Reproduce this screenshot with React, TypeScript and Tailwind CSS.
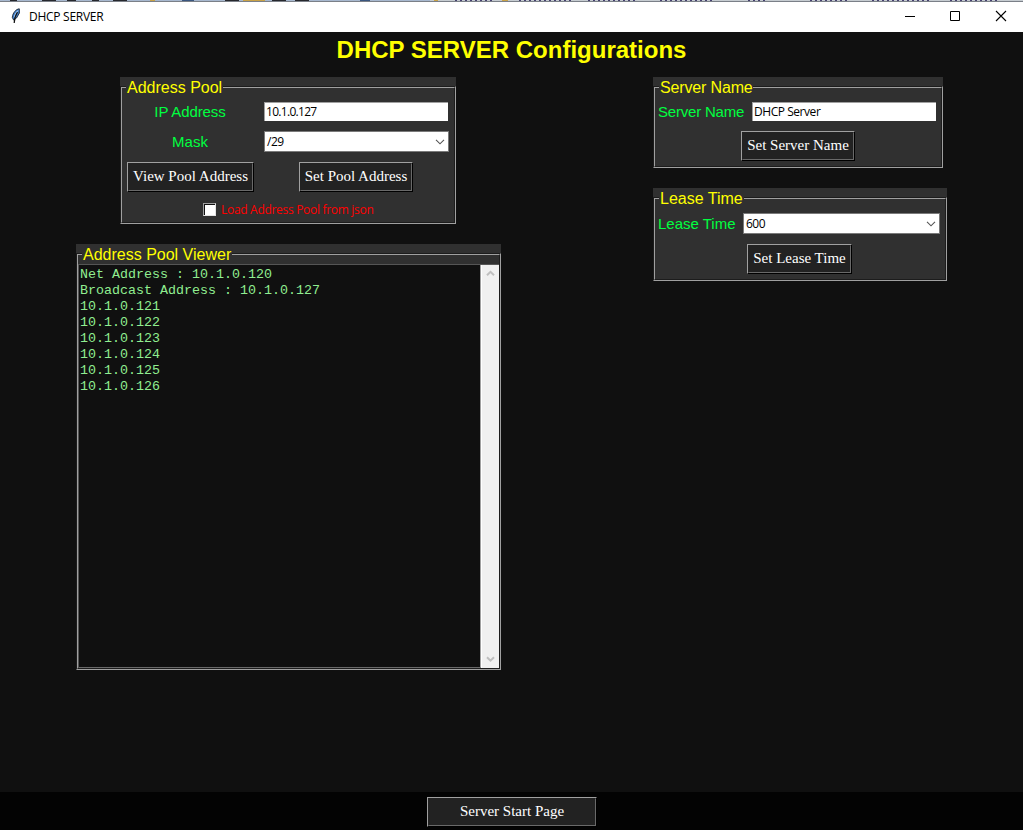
import React from "react";

const sans = "font-['Liberation_Sans',Arial,sans-serif]";
const ui = "font-['Open_Sans','Noto_Sans',sans-serif]";

function Group({ title, titleClass, className, children }: { title: string; titleClass: string; className: string; children: React.ReactNode }) {
  return (
    <section className={`bg-[#303030] pt-[9px] ${className}`}>
      <div className="h-full border border-t-[#1c1c1c] border-l-[#1c1c1c] border-r-[#a0a0a0] border-b-[#a0a0a0]">
        <div className="h-full border border-t-[#a0a0a0] border-l-[#a0a0a0] border-r-[#1c1c1c] border-b-[#1c1c1c]">
          <h2 className={`-mt-[9px] ml-1 h-[17px] bg-[#303030] text-[16px] leading-[17px] whitespace-nowrap text-[#ffff00] ${sans} ${titleClass}`}>{title}</h2>
          {children}
        </div>
      </div>
    </section>
  );
}

function Button({ className, children }: { className: string; children: string }) {
  return (
    <button className={`block border border-t-[#a0a0a0] border-l-[#a0a0a0] border-r-black border-b-black ${className}`}>
      <span className="flex h-full items-center justify-center border border-t-[#222222] border-l-[#222222] border-r-[#696969] border-b-[#696969] bg-[#222222] pb-px font-['Liberation_Serif','Times_New_Roman',serif] text-[15px] leading-[17px] whitespace-nowrap text-white">
        {children}
      </span>
    </button>
  );
}

function Label({ className, children }: { className: string; children: string }) {
  return <label className={`block text-[15px] leading-[17px] whitespace-nowrap text-[#00ff40] ${sans} ${className}`}>{children}</label>;
}

function Entry({ value, className }: { value: string; className: string }) {
  return (
    <div className={`h-[19px] w-[184px] border-t border-l border-[#a0a0a0] bg-white pl-px text-[12px] leading-[18px] whitespace-nowrap text-black ${ui} ${className}`}>{value}</div>
  );
}

function Combo({ value, className }: { value: string; className: string }) {
  return (
    <div className={`flex h-[21px] items-center justify-between border border-[#7a7a7a] bg-white pr-[3px] pl-[2px] text-[12px] leading-[17px] text-black ${ui} ${className}`}>
      <span className="tracking-[-0.5px]">{value}</span>
      <svg width="10" height="6" viewBox="0 0 10 6" fill="none"><path d="M1 .8 5 4.8 9 .8" stroke="#555" strokeWidth="1.1" /></svg>
    </div>
  );
}

function Feather() {
  return (
    <svg className="mt-[6px]" width="10" height="16" viewBox="0 0 10 16">
      <path d="M8.3.8C5 1.2 1.8 4.6 1.3 9.4L2.6 12 5.5 10 8.4 5Z" fill="#3979c7" stroke="#1c2733" strokeWidth=".9" />
      <path d="M7.5 1.8C5 3.4 3 6.6 2.6 10L4.2 8.2 6.7 4.2Z" fill="#a9cff5" />
      <path d="M6.5 4Q3.5 8.5 3.2 15" fill="none" stroke="#111" strokeWidth="1.2" />
    </svg>
  );
}

function BackdropStrip() {
  return (
    <svg className="block h-[2px] shrink-0" width="1023" height="2" viewBox="0 0 1023 2">
      <path d="M0 .5h430" stroke="#a7b8cf" />
      <path d="M430 .5h593" stroke="#c6ccd1" />
      <path d="M0 1.5h1023" stroke="#7b8088" />
      <path d="M10 .5h7M42 .5h14M67 .5h9M92 .5h7M113 .5h14M225 .5h14M272 .5h14M295 .5h14" stroke="#26282e" />
      <path d="M150 .5h5M243 .5h22M434 .5h4M502 .5h6" stroke="#c9a247" />
      <path d="M182 .5h12M360 .5h10" stroke="#3a567f" />
      <path d="M455 .5h38M519 .5h54M588 .5h50M660 .5h52M748 .5h20M810 .5h40M872 .5h60M950 .5h48" stroke="#45406f" strokeDasharray="2 3" />
    </svg>
  );
}

const lines = ["Net Address : 10.1.0.120", "Broadcast Address : 10.1.0.127", "10.1.0.121", "10.1.0.122", "10.1.0.123", "10.1.0.124", "10.1.0.125", "10.1.0.126"];

export default function App() {
  return (
    <div className="flex h-[830px] w-[1023px] flex-col overflow-hidden bg-[#101010]">
      <BackdropStrip />
      <header className="flex h-[30px] shrink-0 justify-between bg-white">
        <div className="flex pl-[11px]">
          <Feather />
          <span className={`mt-[6px] ml-2 text-[12px] leading-[17px] tracking-[-0.27px] whitespace-nowrap text-black ${ui}`}>DHCP SERVER</span>
        </div>
        <svg width="118" height="30" viewBox="0 0 118 30" fill="none" stroke="#000">
          <path d="M0 14.5h10M45.5 9.5h9v9h-9z" />
          <path d="m91 9 10 10m0-10L91 19" strokeWidth="1.1" />
        </svg>
      </header>
      <h1 className={`mt-[4px] h-7 shrink-0 text-center text-[24px] leading-7 font-bold whitespace-nowrap text-[#ffff00] ${sans}`}>DHCP SERVER Configurations</h1>

      <main className="flex grow items-start pt-[13px]">
        <div className="w-[577px] pl-[76px]">
          <Group title="Address Pool" titleClass="w-[97px] pl-px" className="ml-11 h-[147px] w-[336px]">
            <div className="mt-[6px] flex h-[19px]">
              <Label className="mt-px w-[136px] text-center tracking-[-0.1px]">IP Address</Label>
              <Entry value="10.1.0.127" className="ml-[6px] tracking-[-0.7px]" />
            </div>
            <div className="mt-[10px] flex h-[21px]">
              <Label className="mt-[2px] w-[136px] text-center">Mask</Label>
              <Combo value="/29" className="ml-[6px] w-[185px]" />
            </div>
            <div className="mt-[10px] flex pl-[5px]">
              <Button className="h-[30px] w-[127px]">View Pool Address</Button>
              <Button className="ml-[45px] h-[30px] w-[114px]">Set Pool Address</Button>
            </div>
            <div className="mt-[9px] flex pl-[81px]">
              <div className="mt-[2px] h-[13px] w-[13px] border border-t-[#a0a0a0] border-l-[#a0a0a0] border-r-[#e3e3e3] border-b-[#e3e3e3]">
                <div className="h-full border-t border-l border-[#111] bg-white" />
              </div>
              <span className={`ml-[5px] text-[12px] leading-[17px] tracking-[-0.3px] whitespace-nowrap text-[#ff0000] ${ui}`}>Load Address Pool from json</span>
            </div>
          </Group>

          <Group title="Address Pool Viewer" titleClass="w-[150px] pl-px" className="mt-5 h-[426px] w-[425px]">
            <div className="mt-px flex h-[404px] border-t border-l border-[#555]">
              <pre className="w-[402px] border-r border-b border-r-[#a0a0a0] border-b-[#696969] bg-[#101010] pt-[2px] pl-px font-['Liberation_Mono','Courier_New',monospace] text-[13.333px] leading-4 text-[#90ee90]">{lines.join("\n")}</pre>
              <div className="flex grow flex-col items-center justify-between border-l border-white bg-[#f0f0f0] pt-[5px] pb-[5px]">
                <svg width="9" height="7" viewBox="0 0 9 7" fill="none"><path d="m1 5.3 3.5-3.5L8 5.3" stroke="#bfbfbf" strokeWidth="2" /></svg>
                <svg width="9" height="7" viewBox="0 0 9 7" fill="none"><path d="m1 1.2 3.5 3.5L8 1.2" stroke="#bfbfbf" strokeWidth="2" /></svg>
              </div>
            </div>
          </Group>
        </div>

        <div className="pl-[76px]">
          <Group title="Server Name" titleClass="w-[94px] pl-px tracking-[-0.15px]" className="h-[91px] w-[290px]">
            <div className="mt-[6px] flex h-[19px]">
              <Label className="mt-px ml-[3px] w-[94px] tracking-[-0.2px]">Server Name</Label>
              <Entry value="DHCP Server" className="tracking-[-0.45px]" />
            </div>
            <Button className="mt-[10px] ml-[86px] h-[30px] w-[114px]">Set Server Name</Button>
          </Group>
          <Group title="Lease Time" titleClass="w-[85px] pl-px" className="mt-[20px] h-[93px] w-[294px]">
            <div className="mt-[6px] flex h-[21px]">
              <Label className="mt-[2px] ml-[3px] w-[85px]">Lease Time</Label>
              <Combo value="600" className="w-[197px]" />
            </div>
            <Button className="mt-[10px] ml-[92px] h-[30px] w-[105px]">Set Lease Time</Button>
          </Group>
        </div>
      </main>

      <footer className="flex h-[38px] shrink-0 bg-[#030303] pt-[5px] pl-[427px]">
        <Button className="h-[30px] w-[170px]">Server Start Page</Button>
      </footer>
    </div>
  );
}
